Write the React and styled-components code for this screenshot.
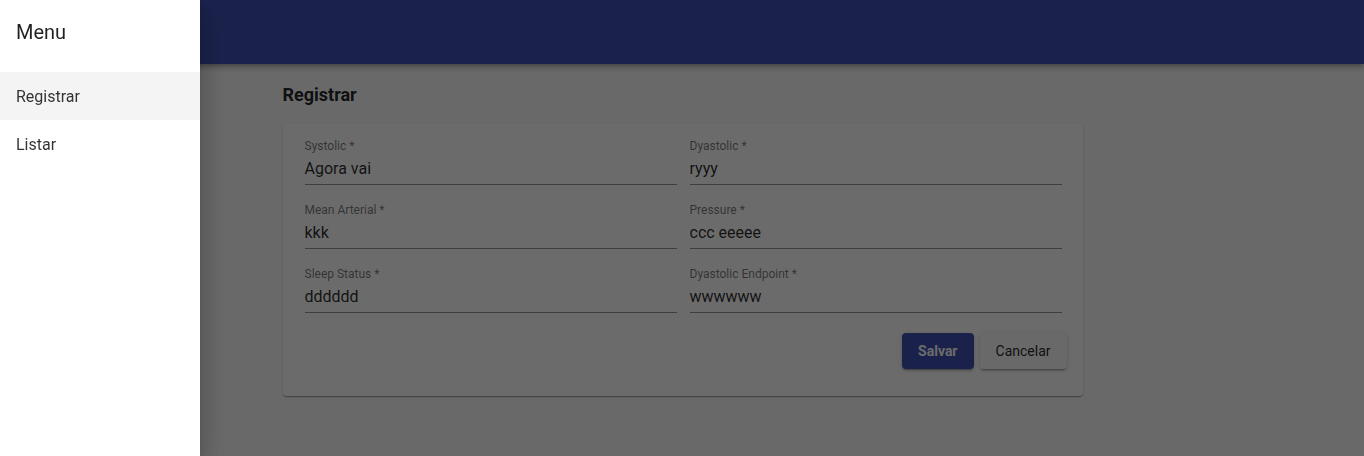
import React from "react";
import styled, { createGlobalStyle } from "styled-components";

const GlobalStyle = createGlobalStyle`
  html, body { margin: 0; padding: 0; }
  body {
    font-family: Roboto, "Noto Sans", "Liberation Sans", sans-serif;
    background: #fafafa;
    color: rgba(0,0,0,0.87);
  }
  * { box-sizing: border-box; }
`;

const Page = styled.div`
  min-height: 456px;
  display: flex;
  flex-direction: column;
`;

const AppBar = styled.header`
  height: 64px;
  background: #3f51b5;
  box-shadow: 0 2px 4px -1px rgba(0,0,0,0.2), 0 4px 5px 0 rgba(0,0,0,0.14), 0 1px 10px 0 rgba(0,0,0,0.12);
`;

const Main = styled.main`
  display: flex;
  justify-content: center;
  padding: 20px 0 0 1px;
`;

const Container = styled.div`
  width: 800px;
  display: flex;
  flex-direction: column;
`;

const Title = styled.h2`
  margin: 0 0 18px;
  font-size: 18px;
  line-height: 22px;
  font-weight: 700;
  color: rgba(0,0,0,0.87);
`;

const Card = styled.form`
  background: #fff;
  border-radius: 4px;
  padding: 15px 16px 27px 22px;
  box-shadow: 0 2px 1px -1px rgba(0,0,0,0.2), 0 1px 1px 0 rgba(0,0,0,0.14), 0 1px 3px 0 rgba(0,0,0,0.12);
  display: flex;
  flex-direction: column;
`;

const Grid = styled.div`
  display: grid;
  grid-template-columns: 1fr 1fr;
  column-gap: 13px;
  row-gap: 18px;
  padding-right: 5px;
`;

const Field = styled.label`
  display: flex;
  flex-direction: column;
`;

const Label = styled.span`
  font-size: 12px;
  line-height: 14px;
  color: rgba(0,0,0,0.54);
  margin-bottom: 6px;
`;

const Value = styled.span`
  font-size: 16px;
  line-height: 19px;
  padding-bottom: 6px;
  color: rgba(0,0,0,0.84);
  border-bottom: 1px solid rgba(0,0,0,0.42);
`;

const Actions = styled.div`
  display: flex;
  justify-content: flex-end;
  gap: 6px;
  margin-top: 20px;
`;

const Button = styled.button`
  height: 36px;
  padding: 0 16px;
  border: none;
  border-radius: 4px;
  font-family: Roboto, "Liberation Sans", sans-serif;
  font-size: 14px;
  font-weight: ${(p) => (p.$primary ? 700 : 400)};
  background: ${(p) => (p.$primary ? "#3f51b5" : "#fafafa")};
  color: ${(p) => (p.$primary ? "#fff" : "rgba(0,0,0,0.87)")};
  box-shadow: 0 3px 1px -2px rgba(0,0,0,0.2), 0 2px 2px 0 rgba(0,0,0,0.14), 0 1px 5px 0 rgba(0,0,0,0.12);
`;

const Backdrop = styled.div`
  position: fixed;
  inset: 0;
  background: rgba(0,0,0,0.58);
`;

const Drawer = styled.nav`
  position: fixed;
  top: 0;
  left: 0;
  bottom: 0;
  width: 200px;
  background: #fff;
  display: flex;
  flex-direction: column;
  box-shadow: 0 8px 10px -5px rgba(0,0,0,0.2), 0 16px 24px 2px rgba(0,0,0,0.14), 0 6px 30px 5px rgba(0,0,0,0.12);
`;

const DrawerHeader = styled.div`
  height: 64px;
  display: flex;
  align-items: center;
  padding: 0 16px;
  font-size: 20px;
  font-weight: 400;
  color: rgba(0,0,0,0.87);
`;

const MenuList = styled.ul`
  list-style: none;
  margin: 0;
  padding: 8px 0;
`;

const MenuItem = styled.li`
  height: 48px;
  display: flex;
  align-items: center;
  padding: 0 16px;
  font-size: 16px;
  color: rgba(0,0,0,0.8);
  background: ${(p) => (p.$selected ? "rgba(0,0,0,0.045)" : "transparent")};
`;

const fields = [
  ["Systolic *", "Agora vai"],
  ["Dyastolic *", "ryyy"],
  ["Mean Arterial *", "kkk"],
  ["Pressure *", "ccc eeeee"],
  ["Sleep Status *", "dddddd"],
  ["Dyastolic Endpoint *", "wwwwww"],
];

export default function App() {
  return (
    <>
      <GlobalStyle />
      <Page>
        <AppBar />
        <Main>
          <Container>
            <Title>Registrar</Title>
            <Card onSubmit={(e) => e.preventDefault()}>
              <Grid>
                {fields.map(([l, v]) => (
                  <Field key={l}>
                    <Label>{l}</Label>
                    <Value>{v}</Value>
                  </Field>
                ))}
              </Grid>
              <Actions>
                <Button $primary type="submit">Salvar</Button>
                <Button type="button">Cancelar</Button>
              </Actions>
            </Card>
          </Container>
        </Main>
      </Page>
      <Backdrop />
      <Drawer>
        <DrawerHeader>Menu</DrawerHeader>
        <MenuList>
          <MenuItem $selected>Registrar</MenuItem>
          <MenuItem>Listar</MenuItem>
        </MenuList>
      </Drawer>
    </>
  );
}
